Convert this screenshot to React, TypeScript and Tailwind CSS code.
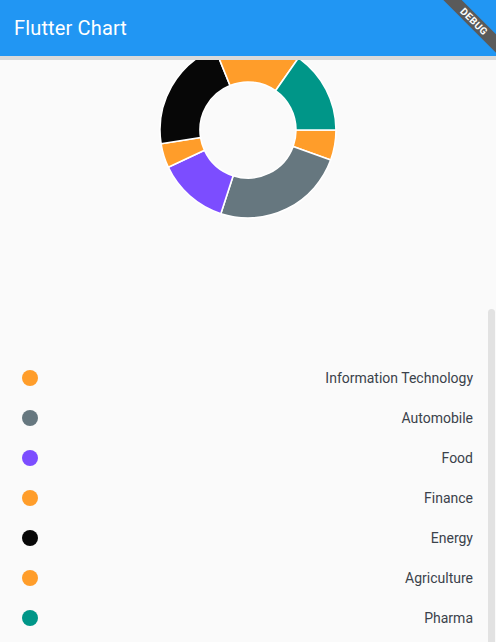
const segments = [
  { label: 'Information Technology', color: '#FF9D2A', from: 0, to: 20 },
  { label: 'Automobile', color: '#66777F', from: 20, to: 108 },
  { label: 'Food', color: '#7C4DFF', from: 108, to: 155 },
  { label: 'Finance', color: '#FF9D2A', from: 155, to: 171 },
  { label: 'Energy', color: '#070707', from: 171, to: 248 },
  { label: 'Agriculture', color: '#FF9D2A', from: 248, to: 305 },
  { label: 'Pharma', color: '#009688', from: 305, to: 360 },
];

const R = 88;
const r = 48;

const pt = (rad: number, deg: number) => {
  const a = (deg * Math.PI) / 180;
  return `${(rad * Math.cos(a)).toFixed(2)} ${(rad * Math.sin(a)).toFixed(2)}`;
};

const arc = (from: number, to: number) => {
  const large = to - from > 180 ? 1 : 0;
  return `M ${pt(R, from)} A ${R} ${R} 0 ${large} 1 ${pt(R, to)} L ${pt(r, to)} A ${r} ${r} 0 ${large} 0 ${pt(r, from)} Z`;
};

const App = () => {
  return (
    <div className="relative w-[496px] h-[642px] overflow-hidden bg-[#fafafa]" style={{ fontFamily: 'Roboto, "Noto Sans", sans-serif' }}>
      {/* App bar */}
      <header className="h-14 bg-[#2196F3] flex items-center px-[14px]">
        <h1 className="text-white text-[20px] font-normal tracking-[0.15px]">Flutter Chart</h1>
      </header>
      <div className="h-1 bg-[#dadada]" />

      {/* Donut */}
      <div className="flex justify-center">
        <svg width="180" height="160" viewBox="-90 -70 180 160">
          {segments.map((s) => (
            <path key={s.label} d={arc(s.from, s.to)} fill={s.color} stroke="#ffffff" strokeWidth="1.6" strokeLinejoin="round" />
          ))}
        </svg>
      </div>

      {/* Legend list */}
      <div className="relative mt-[80px]">
        <div className="h-[58px]" />
        <ul>
          {segments.map((s) => (
            <li key={s.label} className="h-10 flex items-center justify-between pl-[22px] pr-[23px]">
              <span className="w-4 h-4 rounded-full" style={{ backgroundColor: s.color }} />
              <span className="text-[14px] text-[#3b424b]">{s.label}</span>
            </li>
          ))}
        </ul>
      </div>

      {/* Scrollbar thumb */}
      <div className="absolute right-[1px] top-[309px] w-[7px] h-[340px] rounded-t-full bg-[#e2e2e2]" />

      {/* Debug banner */}
      <div className="absolute top-[15px] left-[414px] w-[120px] h-[13px] rotate-45 bg-[#5a5a5a] flex items-center justify-center">
        <span className="text-white text-[10px] font-bold tracking-[0.4px] leading-none">DEBUG</span>
      </div>
    </div>
  );
};

export default App;
